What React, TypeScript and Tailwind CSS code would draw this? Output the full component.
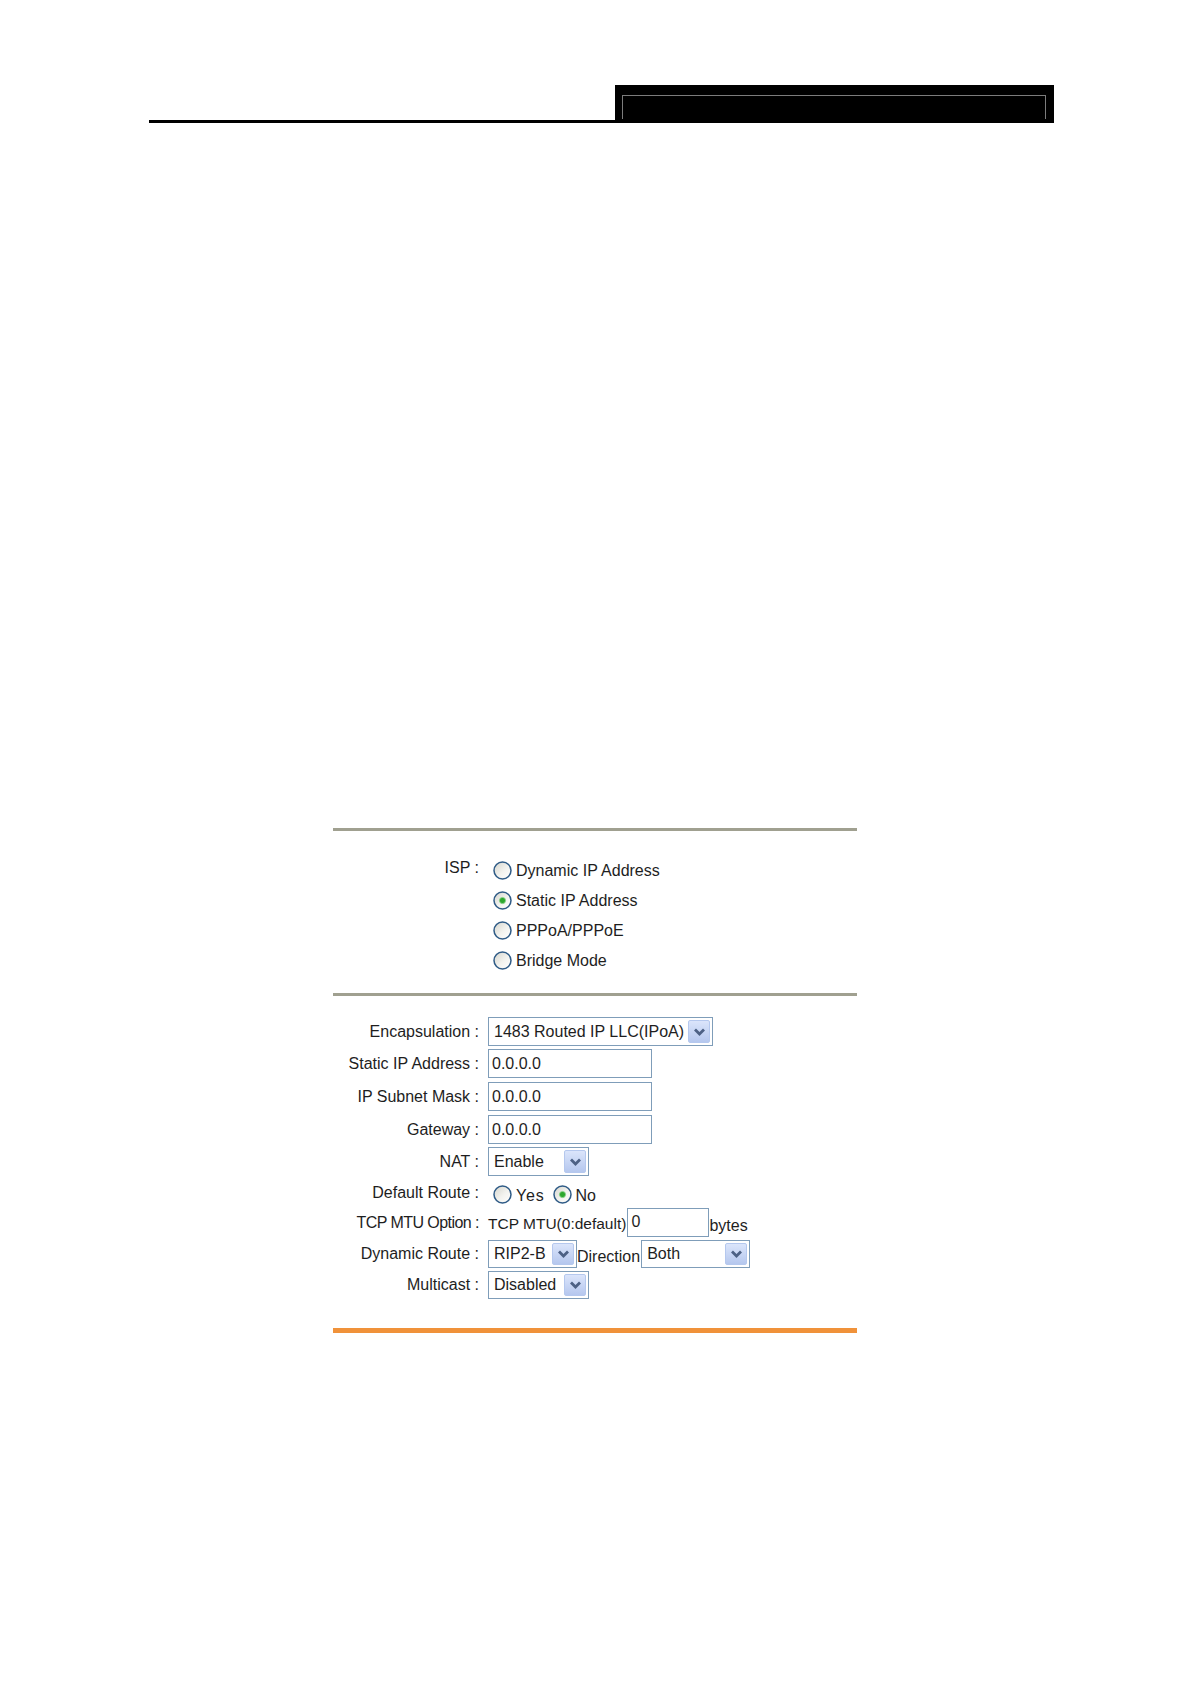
import { useId } from 'react';

// XP-style radio button
function Radio({ checked = false }: { checked?: boolean }) {
    const id = useId();
    return (
        <svg width="19" height="19" viewBox="0 0 19 19" className="shrink-0">
            <defs>
                <linearGradient id={id} x1="0" y1="0" x2="1" y2="1">
                    <stop offset="0" stopColor="#d4d4cc" />
                    <stop offset="0.55" stopColor="#f3f3ef" />
                    <stop offset="1" stopColor="#ffffff" />
                </linearGradient>
            </defs>
            <circle cx="9.5" cy="9.5" r="8.5" fill={`url(#${id})`} stroke="#2f5b86" strokeWidth="1.5" />
            {checked && <circle cx="9.5" cy="9.5" r="3.1" fill="#2ea82e" stroke="#8fd48f" strokeWidth="0.8" />}
        </svg>
    );
}

function Select({ value, width, height = 'h-[29px]' }: { value: string; width: string; height?: string }) {
    return (
        <div className={`${width} ${height} flex items-center border border-[#7f9db9] bg-white`}>
            <span className="flex-1 pl-[5px] whitespace-nowrap">{value}</span>
            <div className="mr-[2px] flex h-[calc(100%-4px)] w-[22px] items-center justify-center rounded-[2px] border border-[#b5c8ee] bg-linear-to-b from-[#dbe5fb] to-[#b5c7ee]">
                <svg width="13" height="10" viewBox="0 0 13 10">
                    <polyline points="2,2.5 6.5,7 11,2.5" fill="none" stroke="#4d6185" strokeWidth="2.8" />
                </svg>
            </div>
        </div>
    );
}

function TextBox({ value, width }: { value: string; width: string }) {
    return (
        <div className={`${width} h-[29px] flex items-center border border-[#7f9db9] bg-white pl-[3px]`}>
            {value}
        </div>
    );
}

function Row({ label, className = '', labelClass = '', children }: { label: string; className?: string; labelClass?: string; children: React.ReactNode }) {
    return (
        <div className={`flex items-center ${className}`}>
            <div className={`w-[146px] text-right whitespace-nowrap ${labelClass}`}>{label}</div>
            <div className="ml-[9px] flex h-full items-center">{children}</div>
        </div>
    );
}

const ispOptions = [
    { name: 'Dynamic IP Address', checked: false },
    { name: 'Static IP Address', checked: true },
    { name: 'PPPoA/PPPoE', checked: false },
    { name: 'Bridge Mode', checked: false },
];

export default function App() {
    return (
        <div
            className="min-h-[1684px] w-[1190px] bg-white text-[16px] text-[#1e1e1e]"
            style={{ fontFamily: '"Liberation Sans", Arial, sans-serif' }}
        >
            {/* Page header */}
            <div className="ml-[149px] flex w-[905px] items-end pt-[85px]">
                <div className="h-[3px] flex-1 bg-black" />
                <div className="h-[38px] w-[439px] bg-black pt-[10px] pr-[8px] pl-[7px]">
                    <div className="h-[24px] border-t border-r border-l border-[#7c7c7c]" />
                </div>
            </div>

            {/* Form */}
            <div className="mt-[705px] ml-[333px] w-[524px]">
                <div className="h-[3px] bg-[#a0a090]" />

                {/* ISP */}
                <div className="mt-[24px] flex">
                    <div className="w-[146px] pt-[2px] text-right leading-[22px]">ISP :</div>
                    <div className="ml-[9px] flex flex-col">
                        {ispOptions.map((opt) => (
                            <div key={opt.name} className="flex h-[30px] items-center">
                                <span className="ml-[5px] mr-[4px] flex">
                                    <Radio checked={opt.checked} />
                                </span>
                                <span className="pt-[2px]">{opt.name}</span>
                            </div>
                        ))}
                    </div>
                </div>

                <div className="mt-[18px] h-[3px] bg-[#a0a090]" />

                <div className="mt-[21px] flex flex-col">
                    <Row label="Encapsulation :" className="h-[29px]">
                        <Select value="1483 Routed IP LLC(IPoA)" width="w-[225px]" />
                    </Row>
                    <Row label="Static IP Address :" className="mt-[3px] h-[29px]">
                        <TextBox value="0.0.0.0" width="w-[164px]" />
                    </Row>
                    <Row label="IP Subnet Mask :" className="mt-[4px] h-[29px]">
                        <TextBox value="0.0.0.0" width="w-[164px]" />
                    </Row>
                    <Row label="Gateway :" className="mt-[4px] h-[29px]">
                        <TextBox value="0.0.0.0" width="w-[164px]" />
                    </Row>
                    <Row label="NAT :" className="mt-[3px] h-[29px]">
                        <Select value="Enable" width="w-[101px]" />
                    </Row>
                    <Row label="Default Route :" className="mt-[2px] h-[30px]">
                        <span className="ml-[5px] mr-[4px] flex pt-[2px]">
                            <Radio />
                        </span>
                        <span className="pt-[5px] tracking-[0.8px]">Yes</span>
                        <span className="ml-[8px] mr-[4px] flex pt-[2px]">
                            <Radio checked />
                        </span>
                        <span className="pt-[5px]">No</span>
                    </Row>
                    <Row label="TCP MTU Option :" className="h-[29px]" labelClass="tracking-[-0.55px]">
                        <span className="pt-[2px] text-[15.5px]">TCP MTU(0:default)</span>
                        <div className="ml-[1px] flex h-[29px] w-[82px] items-start border border-[#7f9db9] bg-white pt-[1px] pl-[3px]">
                            0
                        </div>
                        <span className="pt-[6px]">bytes</span>
                    </Row>
                    <Row label="Dynamic Route :" className="mt-[3px] h-[28px]">
                        <Select value="RIP2-B" width="w-[89px]" height="h-[28px]" />
                        <span className="pt-[6px]">Direction</span>
                        <div className="ml-[1px]">
                            <Select value="Both" width="w-[109px]" height="h-[28px]" />
                        </div>
                    </Row>
                    <Row label="Multicast :" className="mt-[3px] h-[28px]">
                        <Select value="Disabled" width="w-[101px]" height="h-[28px]" />
                    </Row>
                </div>

                <div className="mt-[29px] h-[5px] bg-[#f0923a]" />
            </div>
        </div>
    );
}
